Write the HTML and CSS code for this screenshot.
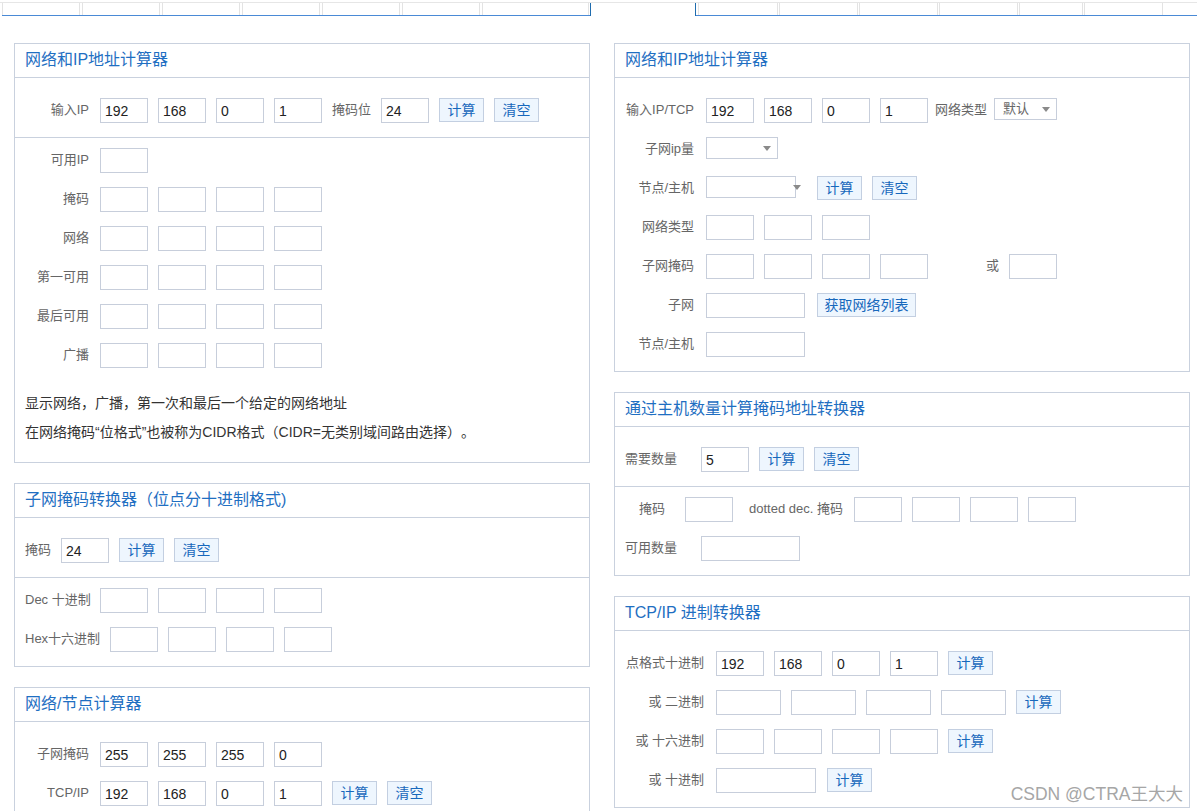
FILE: index.html
```html
<!DOCTYPE html>
<html lang="zh-CN">
<head>
<meta charset="utf-8">
<title>网络和IP地址计算器</title>
<link rel="stylesheet" href="styles.css">
</head>
<body>
<div class="tabs">
  <div class="tab-group tg-left">
    <div class="tab"></div><div class="tab"></div><div class="tab"></div><div class="tab"></div><div class="tab"></div><div class="tab"></div><div class="tab tab-wide"></div>
  </div>
  <div class="tab-active"></div>
  <div class="tab-group tg-right">
    <div class="tab tab-w80"></div><div class="tab tab-w79"></div><div class="tab tab-w79"></div><div class="tab tab-w79"></div><div class="tab tab-w64"></div><div class="tab tab-w79"></div>
  </div>
</div>

<div class="page">
  <div class="col">
    <div class="box">
      <div class="box-head">网络和IP地址计算器</div>
      <div class="sec sec-top">
        <div class="row">
          <span class="lbl lc1">输入IP</span>
          <input class="inp" value="192"><input class="inp" value="168"><input class="inp" value="0"><input class="inp" value="1">
          <span class="lbl mr10">掩码位</span>
          <input class="inp" value="24">
          <button class="btn">计算</button><button class="btn">清空</button>
        </div>
      </div>
      <div class="sec sec-res last">
        <div class="row"><span class="lbl lc1">可用IP</span><input class="inp"></div>
        <div class="row"><span class="lbl lc1">掩码</span><input class="inp"><input class="inp"><input class="inp"><input class="inp"></div>
        <div class="row"><span class="lbl lc1">网络</span><input class="inp"><input class="inp"><input class="inp"><input class="inp"></div>
        <div class="row"><span class="lbl lc1">第一可用</span><input class="inp"><input class="inp"><input class="inp"><input class="inp"></div>
        <div class="row"><span class="lbl lc1">最后可用</span><input class="inp"><input class="inp"><input class="inp"><input class="inp"></div>
        <div class="row"><span class="lbl lc1">广播</span><input class="inp"><input class="inp"><input class="inp"><input class="inp"></div>
        <div class="notes">
          <p>显示网络，广播，第一次和最后一个给定的网络地址</p>
          <p>在网络掩码“位格式”也被称为CIDR格式（CIDR=无类别域间路由选择）。</p>
        </div>
      </div>
    </div>

    <div class="box">
      <div class="box-head">子网掩码转换器（位点分十进制格式)</div>
      <div class="sec sec-top">
        <div class="row">
          <span class="lbl mr10">掩码</span>
          <input class="inp" value="24">
          <button class="btn">计算</button><button class="btn">清空</button>
        </div>
      </div>
      <div class="sec sec-res last">
        <div class="row"><span class="lbl mr9">Dec 十进制</span><input class="inp"><input class="inp"><input class="inp"><input class="inp"></div>
        <div class="row"><span class="lbl mr10">Hex十六进制</span><input class="inp"><input class="inp"><input class="inp"><input class="inp"></div>
      </div>
    </div>

    <div class="box">
      <div class="box-head">网络/节点计算器</div>
      <div class="sec sec-top last">
        <div class="row"><span class="lbl lc1">子网掩码</span><input class="inp" value="255"><input class="inp" value="255"><input class="inp" value="255"><input class="inp" value="0"></div>
        <div class="row"><span class="lbl lc1">TCP/IP</span><input class="inp" value="192"><input class="inp" value="168"><input class="inp" value="0"><input class="inp" value="1"><button class="btn">计算</button><button class="btn">清空</button></div>
      </div>
    </div>
  </div>

  <div class="col">
    <div class="box">
      <div class="box-head">网络和IP地址计算器</div>
      <div class="sec sec-top last">
        <div class="row">
          <span class="lbl lc2">输入IP/TCP</span>
          <input class="inp" value="192"><input class="inp" value="168"><input class="inp" value="0"><input class="inp mr7" value="1">
          <span class="lbl mr7">网络类型</span>
          <div class="sel sel-type"><span class="sel-text">默认</span><span class="caret"></span></div>
        </div>
        <div class="row">
          <span class="lbl lc2">子网ip量</span>
          <div class="sel sel-sub"><span class="caret"></span></div>
        </div>
        <div class="row">
          <span class="lbl lc2">节点/主机</span>
          <div class="sel sel-host"><span class="caret caret-out"></span></div>
          <button class="btn">计算</button><button class="btn">清空</button>
        </div>
        <div class="row">
          <span class="lbl lc2">网络类型</span>
          <input class="inp"><input class="inp"><input class="inp">
        </div>
        <div class="row">
          <span class="lbl lc2">子网掩码</span>
          <input class="inp"><input class="inp"><input class="inp"><input class="inp">
          <span class="lbl or-lbl">或</span>
          <input class="inp">
        </div>
        <div class="row">
          <span class="lbl lc2">子网</span>
          <input class="inp inp-w99">
          <button class="btn btn-wide">获取网络列表</button>
        </div>
        <div class="row">
          <span class="lbl lc2">节点/主机</span>
          <input class="inp inp-w99">
        </div>
      </div>
    </div>

    <div class="box">
      <div class="box-head">通过主机数量计算掩码地址转换器</div>
      <div class="sec sec-top">
        <div class="row">
          <span class="lbl lc4">需要数量</span>
          <input class="inp" value="5">
          <button class="btn">计算</button><button class="btn">清空</button>
        </div>
      </div>
      <div class="sec sec-res last">
        <div class="row">
          <span class="lbl lc5">掩码</span>
          <input class="inp mr16">
          <span class="lbl mr11">dotted dec. 掩码</span>
          <input class="inp"><input class="inp"><input class="inp"><input class="inp">
        </div>
        <div class="row">
          <span class="lbl lc4">可用数量</span>
          <input class="inp inp-w99">
        </div>
      </div>
    </div>

    <div class="box">
      <div class="box-head">TCP/IP 进制转换器</div>
      <div class="sec sec-top last">
        <div class="row">
          <span class="lbl lc3">点格式十进制</span>
          <input class="inp" value="192"><input class="inp" value="168"><input class="inp" value="0"><input class="inp" value="1">
          <button class="btn">计算</button>
        </div>
        <div class="row">
          <span class="lbl lc3">或 二进制</span>
          <input class="inp inp-w65"><input class="inp inp-w65"><input class="inp inp-w65"><input class="inp inp-w65">
          <button class="btn">计算</button>
        </div>
        <div class="row">
          <span class="lbl lc3">或 十六进制</span>
          <input class="inp"><input class="inp"><input class="inp"><input class="inp">
          <button class="btn">计算</button>
        </div>
        <div class="row">
          <span class="lbl lc3">或 十进制</span>
          <input class="inp inp-w100">
          <button class="btn">计算</button>
        </div>
      </div>
    </div>
  </div>
</div>

<div class="watermark">CSDN @CTRA王大大</div>
</body>
</html>
```

FILE: styles.css
```css
* {
  box-sizing: border-box;
}

html, body {
  margin: 0;
  padding: 0;
  background: #ffffff;
}

body {
  font-family: "Liberation Sans", "Noto Sans CJK SC", sans-serif;
  color: #333333;
  height: 811px;
  overflow: hidden;
  position: relative;
  text-spacing-trim: space-all;
}

/* top tab strip */
.tabs {
  display: flex;
  margin-top: 2px;
  border-top: 1px solid #e6e6e6;
  padding-left: 2px;
  height: 14px;
}

.tab-group {
  display: flex;
  height: 13px;
  border-bottom: 1px solid #4a8ad6;
}

.tg-left {
  width: 588px;
  gap: 2px;
}

.tg-right {
  flex: 1;
  gap: 1px;
  padding-left: 2px;
}

.tab {
  width: 78px;
  height: 12px;
  border-left: 1px solid #e3e3e3;
  border-right: 1px solid #e3e3e3;
}

.tab-wide { width: 107px; }
.tab-w80 { width: 80px; }
.tab-w79 { width: 79px; }
.tab-w64 { width: 64px; }

.tab-active {
  width: 106px;
  height: 13px;
  border-left: 1px solid #1f6cae;
  border-right: 1px solid #1f6cae;
}

/* page columns */
.page {
  display: flex;
  gap: 24px;
  padding: 0 7px 0 14px;
  margin-top: 27px;
}

.col {
  width: 576px;
  display: flex;
  flex-direction: column;
  gap: 20px;
}

.box {
  border: 1px solid #c9d1de;
  background: #ffffff;
}

.box-head {
  height: 34px;
  line-height: 32px;
  padding-left: 10px;
  border-bottom: 1px solid #c9d1de;
  color: #1f6fc2;
  font-size: 16px;
  font-family: "Liberation Sans", "Noto Sans CJK SC", sans-serif;
}

.sec {
  padding-left: 10px;
  border-bottom: 1px solid #c9d1de;
}

.sec.last {
  border-bottom: none;
}

.sec-top {
  padding-top: 20px;
  padding-bottom: 14px;
}

.sec-res {
  padding-top: 10px;
  padding-bottom: 14px;
}

.row {
  display: flex;
  align-items: flex-start;
  height: 25px;
}

.row + .row {
  margin-top: 14px;
}

.lbl {
  font-size: 13px;
  line-height: 24px;
  color: #666666;
  white-space: nowrap;
  flex: none;
}

.lc1 { width: 64px; margin-right: 11px; text-align: right; }
.lc2 { width: 69px; margin-right: 12px; text-align: right; }
.lc3 { width: 79px; margin-right: 12px; text-align: right; }
.lc4 { width: 66px; margin-right: 10px; }
.lc5 { width: 46px; padding-left: 14px; margin-right: 14px; }

.mr9 { margin-right: 9px; }
.mr10 { margin-right: 10px; }
.mr7 { margin-right: 7px !important; }
.mr11 { margin-right: 11px; }
.mr16 { margin-right: 16px !important; }

.or-lbl {
  margin-left: 48px;
  margin-right: 10px;
}

.inp {
  flex: none;
  width: 48px;
  height: 25px;
  margin: 0 10px 0 0;
  padding: 0 0 0 4px;
  border: 1px solid #c7cedb;
  border-radius: 0;
  background: #ffffff;
  font-family: "Liberation Sans", sans-serif;
  font-size: 14px;
  line-height: 23px;
  color: #222222;
  outline: none;
}

.inp-w99 { width: 99px; margin-right: 12px; }
.inp-w65 { width: 65px; }
.inp-w100 { width: 100px; margin-right: 11px; }

.btn {
  flex: none;
  width: 45px;
  height: 24px;
  margin: 0 10px 0 0;
  padding: 0;
  border: 1px solid #c3cfe1;
  border-radius: 0;
  background: #eef6fe;
  color: #1768bc;
  font-family: "Liberation Sans", "Noto Sans CJK SC", sans-serif;
  font-size: 14px;
  line-height: 22px;
  text-align: center;
}

.btn-wide {
  width: 99px;
}

.notes {
  margin-top: 21px;
  padding-bottom: 1px;
  font-size: 14px;
  line-height: 29px;
  color: #333333;
  text-spacing-trim: space-all;
}

.notes p {
  margin: 0;
}

/* selects */
.sel {
  flex: none;
  position: relative;
  border: 1px solid #c7cedb;
  background: #ffffff;
  height: 22px;
}

.sel-type {
  width: 63px;
}

.sel-sub {
  width: 72px;
}

.sel-host {
  width: 90px;
  margin-right: 21px;
}

.sel-text {
  display: block;
  padding-left: 8px;
  font-size: 13px;
  line-height: 20px;
  color: #666666;
}

.caret {
  position: absolute;
  right: 6px;
  top: 8px;
  width: 0;
  height: 0;
  border-left: 4px solid transparent;
  border-right: 4px solid transparent;
  border-top: 5px solid #8a8a8a;
}

.caret-out {
  right: -6px;
}

.watermark {
  position: absolute;
  right: 14px;
  bottom: 6px;
  font-family: "Liberation Sans", "Noto Sans CJK SC", sans-serif;
  font-size: 17.5px;
  color: #a6a6a6;
  text-shadow: 0 0 1px rgba(255, 255, 255, 0.8);
  white-space: nowrap;
}
```
